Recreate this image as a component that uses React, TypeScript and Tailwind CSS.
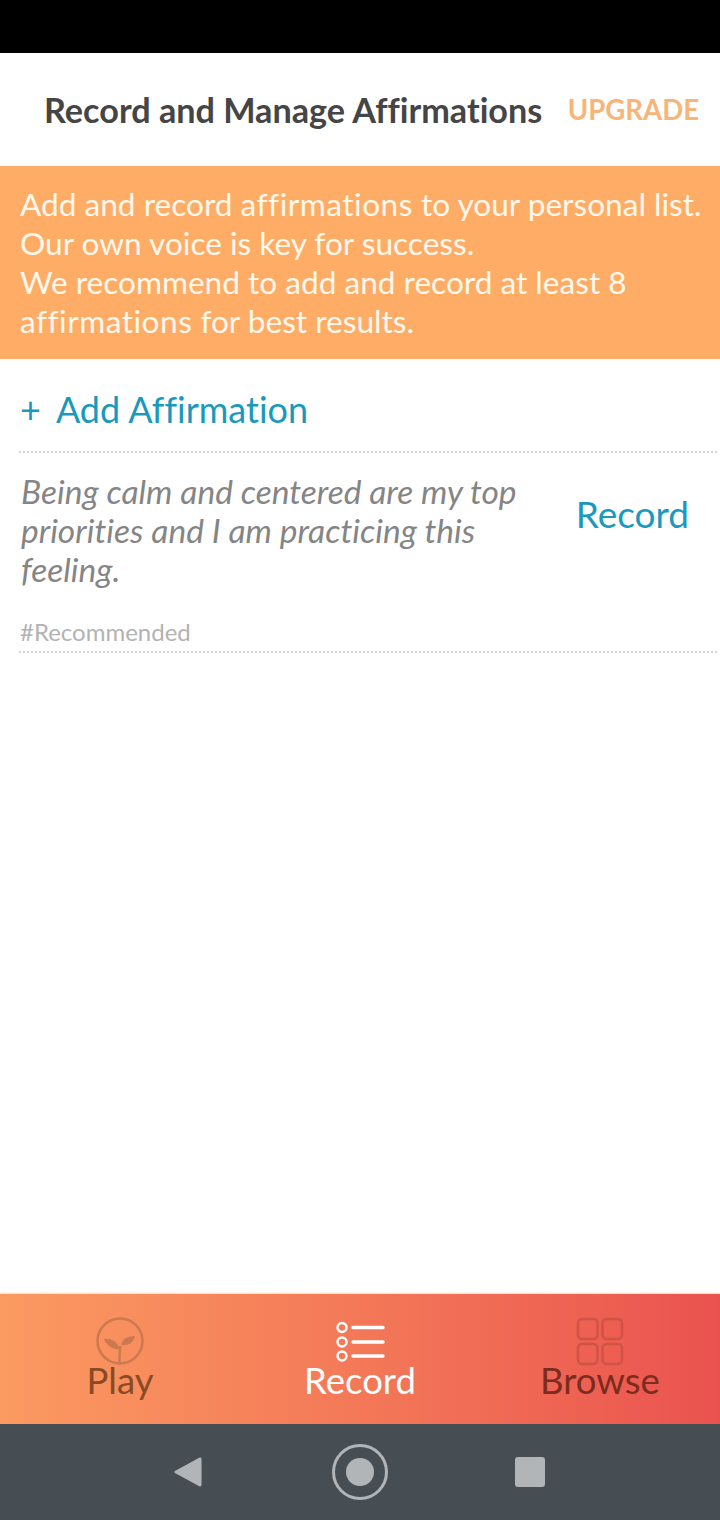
const tabs = [
  { label: "Play", tone: "text-[#8a4a23]" },
  { label: "Record", tone: "text-white" },
  { label: "Browse", tone: "text-[#7c2b1f]" },
];

const PlayIcon = () => (
  <svg width="50" height="50" viewBox="0 0 50 50" fill="none">
    <circle cx="25" cy="24" r="22.5" stroke="#cb7a4f" strokeWidth="2.5" />
    <path d="M24.5 46c0-8 0-13 1-17" stroke="#cb7a4f" strokeWidth="2.5" />
    <path d="M24.5 32C23 25 16 21 9 22c2 6 8 11 15.500 10Z" fill="#cb7a4f" />
    <path d="M26 28c1-6 7-9 14-9-1 6-6 10-14 9Z" fill="#cb7a4f" />
  </svg>
);

const RecordIcon = () => (
  <svg width="50" height="50" viewBox="0 0 50 50" fill="none" stroke="#fff">
    <circle cx="7" cy="10.5" r="4.5" strokeWidth="2.4" />
    <circle cx="7" cy="25" r="4.5" strokeWidth="2.4" />
    <circle cx="7" cy="39" r="4.5" strokeWidth="2.4" />
    <path d="M18 10.500h30M18 25h30M18 39h30" strokeWidth="3.5" strokeLinecap="round" />
  </svg>
);

const BrowseIcon = () => (
  <svg width="50" height="50" viewBox="0 0 50 50" fill="none" stroke="#cf5446" strokeWidth="2.5">
    <rect x="3" y="2" width="19.500" height="20" rx="4" />
    <rect x="27.500" y="2" width="19.500" height="20" rx="4" />
    <rect x="3" y="27" width="19.500" height="20" rx="4" />
    <rect x="27.500" y="27" width="19.500" height="20" rx="4" />
  </svg>
);

const icons = [<PlayIcon />, <RecordIcon />, <BrowseIcon />];

export default function App() {
  return (
    <div className="flex h-[1520px] w-[720px] flex-col bg-white font-['Lato',sans-serif] [font-variant-ligatures:none]">
      {/* status bar */}
      <div className="h-[53px] bg-black" />

      <header className="flex h-[113px] items-center justify-between pl-[44px] pr-[21px]">
        <h1 className="whitespace-nowrap text-[34.200px] font-bold text-[#454545]">Record and Manage Affirmations</h1>
        <span className="text-[27.600px] font-bold text-[#f7b57a]">UPGRADE</span>
      </header>

      <div className="h-[193px] bg-[#ffad66] px-[20px] pt-[19px] text-[31.600px] leading-[39px] text-[#fff8ec]">
        <p className="whitespace-nowrap">
          Add and record <span className="tracking-[0.5px]">affirmations</span> to your personal list.
        </p>
        <p>Our own voice is key for success.</p>
        <p>We recommend to add and record at least 8</p>
        <p>
          <span className="tracking-[0.5px]">affirmations</span> for best results.
        </p>
      </div>

      <div className="ml-[19px] mr-[3px] flex h-[94px] items-center gap-[15px] border-b-2 border-dotted border-[#d6d6d6] pl-[1px] pt-[8px] text-[36px] text-[#1a99bd]">
        <span>+</span>
        <span>Add Affirmation</span>
      </div>

      <div className="ml-[19px] mr-[3px] border-b-2 border-dotted border-[#d6d6d6]">
        <div className="flex items-start justify-between pl-[2px] pr-[28px] pt-[19px]">
          <p className="w-[530px] text-[33.500px] leading-[39px] italic text-[#858585]">
            Being calm and centered are my top priorities and I am practicing this feeling.
          </p>
          <span className="pt-[22px] text-[37px] leading-[40px] text-[#1a99bd]">Record</span>
        </div>
        <p className="mt-[25px] pb-[2px] pl-[1px] text-[24px] leading-[35px] text-[#b3b3b3]">#Recommended</p>
      </div>

      <div className="flex-1" />

      <nav className="grid h-[130px] grid-cols-3 bg-gradient-to-r from-[#fb9a61] to-[#ea524f] shadow-[0_-1px_2px_rgba(255,173,102,0.5)]">
        {tabs.map((tab, i) => (
          <div key={tab.label} className="flex flex-col items-center pt-[23px]">
            {icons[i]}
            <span className={`-mt-[9px] text-[36.500px] leading-[44px] ${tab.tone}`}>{tab.label}</span>
          </div>
        ))}
      </nav>

      {/* android navigation */}
      <div className="flex h-[96px] items-center justify-center gap-[127px] bg-[#474e53] pr-[2px]">
        <svg width="28" height="32" viewBox="0 0 30 34" fill="#b1b5b7" className="mr-[3px]">
          <path d="M28 1.5a1.5 1.5 0 0 1 1.5 1.5v28a1.5 1.5 0 0 1-2.4 1.2L1 18a1.3 1.3 0 0 1 0-2L27 1.7Z" />
        </svg>
        <div className="flex h-[56px] w-[56px] items-center justify-center rounded-full border-[3px] border-[#b1b5b7]">
          <div className="h-[28px] w-[28px] rounded-full bg-[#b1b5b7]" />
        </div>
        <div className="h-[30px] w-[30px] rounded-[3px] bg-[#b1b5b7]" />
      </div>
    </div>
  );
}
